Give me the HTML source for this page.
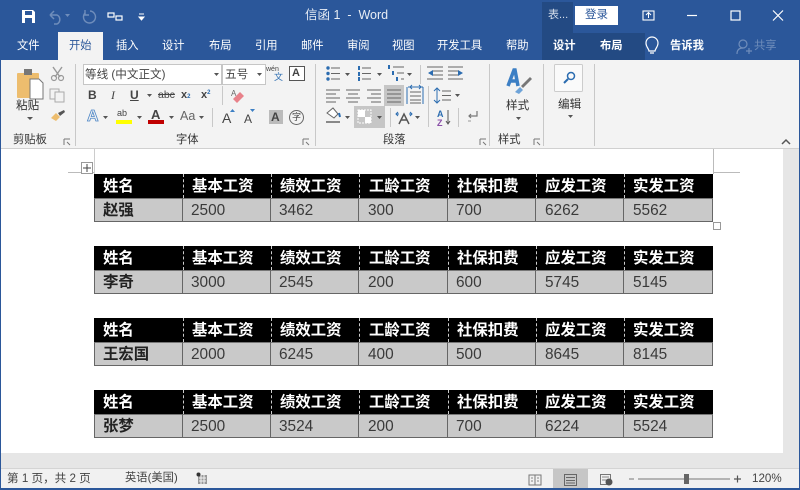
<!DOCTYPE html>
<html lang="zh"><head><meta charset="utf-8">
<style>
*{box-sizing:border-box}
html,body{margin:0;padding:0}
body{width:800px;height:490px;overflow:hidden;position:relative;background:#e6e6e6;font-family:"Liberation Sans","Noto Sans CJK SC",sans-serif;color:#333}
.a{position:absolute;white-space:nowrap;line-height:1}
.r{position:absolute}
svg{position:absolute;left:0;top:0}
.tab{position:absolute;top:40px;font-size:11.3px;color:#fff;line-height:13px;white-space:nowrap}
.t{position:absolute;left:94px;width:619px;height:48px;background:#000}
.row2{position:absolute;left:0;top:24px;width:619px;height:24px;background:#c9c9c9;border:1px solid #666;border-top:1px solid #777}
.c{position:absolute;font-size:15.4px;line-height:24px;white-space:nowrap}
.h{top:1px;color:#fff;font-weight:bold}
.d{top:25px;color:#3a3a3a}
.n{font-weight:bold;color:#222}
.vh{position:absolute;top:0;width:1px;height:24px;border-left:1px dashed #ccc}
.vd{position:absolute;top:24px;width:1px;height:24px;background:#666}
.lab{position:absolute;font-size:11.3px;line-height:12px;color:#333;white-space:nowrap}
</style></head>
<body>
<!-- title bar -->
<div class="r" style="left:0;top:0;width:800px;height:60px;background:#2b579a"></div>
<div class="r" style="left:542px;top:2px;width:31px;height:31px;background:#234a83"></div>
<div class="r" style="left:542px;top:33px;width:103px;height:27px;background:#234a83"></div>
<div class="a" style="left:548px;top:10px;font-size:11px;color:#d5deeb">表...</div>
<div class="r" style="left:575px;top:6px;width:43px;height:19px;background:#fff"></div>
<div class="a" style="left:585px;top:10px;font-size:11.5px;color:#2b579a">登录</div>
<div class="a" style="left:305px;top:9px;font-size:12.5px;color:#e8edf5">信函 1 &nbsp;-&nbsp; Word</div>

<div class="tab" style="left:17px">文件</div>
<div class="r" style="left:58px;top:32px;width:45px;height:29px;background:#f3f3f3"></div>
<div class="tab" style="left:69px;color:#2b579a">开始</div>
<div class="tab" style="left:116px">插入</div>
<div class="tab" style="left:162px">设计</div>
<div class="tab" style="left:209px">布局</div>
<div class="tab" style="left:255px">引用</div>
<div class="tab" style="left:301px">邮件</div>
<div class="tab" style="left:347px">审阅</div>
<div class="tab" style="left:392px">视图</div>
<div class="tab" style="left:437px">开发工具</div>
<div class="tab" style="left:506px">帮助</div>
<div class="tab" style="left:553px;font-weight:bold">设计</div>
<div class="tab" style="left:600px;font-weight:bold">布局</div>
<div class="tab" style="left:670px;font-weight:bold">告诉我</div>
<div class="tab" style="left:754px;color:#6f8dbb">共享</div>

<!-- ribbon -->
<div class="r" style="left:1px;top:60px;width:798px;height:89px;background:#f3f3f3"></div>
<div class="r" style="left:1px;top:148px;width:798px;height:1px;background:#d0d0d0"></div>
<div class="r" style="left:75px;top:64px;width:1px;height:82px;background:#c8c8c8"></div>
<div class="r" style="left:315px;top:64px;width:1px;height:82px;background:#c8c8c8"></div>
<div class="r" style="left:489px;top:64px;width:1px;height:82px;background:#c8c8c8"></div>
<div class="r" style="left:543px;top:64px;width:1px;height:82px;background:#c8c8c8"></div>
<div class="r" style="left:594px;top:64px;width:1px;height:82px;background:#c8c8c8"></div>
<div class="r" style="left:222px;top:86px;width:1px;height:19px;background:#c8c8c8"></div>
<div class="r" style="left:212px;top:108px;width:1px;height:19px;background:#c8c8c8"></div>
<div class="r" style="left:420px;top:65px;width:1px;height:19px;background:#c8c8c8"></div>
<div class="r" style="left:428px;top:86px;width:1px;height:41px;background:#c8c8c8"></div>
<div class="r" style="left:390px;top:108px;width:1px;height:19px;background:#c8c8c8"></div>
<div class="r" style="left:458px;top:108px;width:1px;height:19px;background:#c8c8c8"></div>

<div class="r" style="left:83px;top:64px;width:139px;height:21px;background:#fff;border:1px solid #c6c6c6"></div>
<div class="r" style="left:222px;top:64px;width:44px;height:21px;background:#fff;border:1px solid #c6c6c6"></div>
<div class="a" style="left:85px;top:69px;font-size:11.6px;color:#444">等线 (中文正文)</div>
<div class="a" style="left:225px;top:69px;font-size:11.6px;color:#444">五号</div>

<div class="a" style="left:88px;top:89px;font-size:12px;font-weight:bold;color:#444">B</div>
<div class="a" style="left:111px;top:89px;font-size:12px;font-style:italic;font-family:'Liberation Serif',serif;color:#444">I</div>
<div class="a" style="left:130px;top:89px;font-size:12px;font-weight:bold;text-decoration:underline;color:#444">U</div>
<div class="a" style="left:158px;top:90px;font-size:10.5px;text-decoration:line-through;color:#444">abc</div>
<div class="a" style="left:181px;top:90px;font-size:11px;font-weight:bold;color:#444">x<span style="font-size:6px;color:#2b6cb0">2</span></div>
<div class="a" style="left:201px;top:90px;font-size:11px;font-weight:bold;color:#444">x<span style="font-size:6px;color:#2b6cb0;vertical-align:4px">2</span></div>
<div class="a" style="left:87px;top:109px;font-size:16px;font-weight:bold;color:#f3f3f3;-webkit-text-stroke:.8px #4d86c6">A</div>
<div class="a" style="left:117px;top:109px;font-size:9px;color:#444">ab</div>
<div class="r" style="left:116px;top:120px;width:16px;height:4px;background:#ff0"></div>
<div class="a" style="left:151px;top:108px;font-size:13px;font-weight:bold;color:#444">A</div>
<div class="r" style="left:148px;top:120px;width:16px;height:4px;background:#c00000"></div>
<div class="a" style="left:180px;top:110px;font-size:12.5px;color:#666">Aa</div>
<div class="a" style="left:222px;top:111px;font-size:14px;color:#444">A</div>
<div class="a" style="left:244px;top:113px;font-size:12px;color:#444">A</div>
<div class="a" style="left:266px;top:66px;font-size:7px;color:#444">wén</div>
<div class="a" style="left:274px;top:73px;font-size:9px;color:#2b6cb0">文</div>
<div class="r" style="left:289px;top:66px;width:16px;height:15px;background:#fff;border:1px solid #555"></div>
<div class="a" style="left:292px;top:68px;font-size:11px;font-weight:bold;color:#444">A</div>
<div class="r" style="left:269px;top:110px;width:14px;height:14px;background:#bbb"></div>
<div class="a" style="left:271px;top:111px;font-size:12px;font-weight:bold;color:#444">A</div>
<div class="r" style="left:289px;top:110px;width:15px;height:15px;border:1px solid #666;border-radius:50%"></div>
<div class="a" style="left:292px;top:113px;font-size:9px;color:#444">字</div>

<div class="r" style="left:384px;top:85px;width:20px;height:21px;background:#c6c6c6"></div>
<div class="r" style="left:354px;top:106px;width:31px;height:22px;background:#c6c6c6"></div>

<svg width="800" height="490" fill="none">
 <!-- qat save -->
 <path d="M22 10h11l2 2v11H22z" fill="#fff"/><rect x="25" y="11" width="7" height="4" fill="#2b579a"/><rect x="25" y="18" width="7" height="5" fill="#2b579a"/>
 <path d="M50 15h7a5 5 0 0 1 0 9h-3M50 15l4-4M50 15l4 4" stroke="#6f8dbb" stroke-width="1.5"/>
 <path d="M65 14h5l-2.500 3z" fill="#6f8dbb"/>
 <path d="M90 11a6 6 0 1 1-5 2M85 10v5h4" stroke="#6f8dbb" stroke-width="1.4"/>
 <rect x="108" y="13" width="6" height="4" stroke="#fff" stroke-width="1.2"/><rect x="116" y="16" width="6" height="4" stroke="#fff" stroke-width="1.2"/>
 <path d="M139 14h5M139 17l2.500 3 2.500-3z" stroke="#fff" fill="#fff"/>
 <!-- window controls -->
 <rect x="643" y="11" width="11" height="9" stroke="#fff" stroke-width="1.1"/><path d="M648.500 18v-5M646 15l2.500-2.500 2.500 2.500" stroke="#fff"/>
 <path d="M687 15.500h10" stroke="#fff" stroke-width="1.2"/>
 <rect x="731" y="11" width="9" height="9" stroke="#fff" stroke-width="1.2"/>
 <path d="M773 10.500l10 10M783 10.500l-10 10" stroke="#fff" stroke-width="1.2"/>
 <!-- bulb -->
 <path d="M649 51c0-2-3-4-3-8a6 6 0 0 1 12 0c0 4-3 6-3 8zM650 53h4" stroke="#fff" stroke-width="1.2"/>
 <!-- share -->
 <circle cx="743" cy="44" r="4" stroke="#6f8dbb" stroke-width="1.2"/><path d="M737 54c0-4 2-6 6-6M746 51h6M749 48v6" stroke="#6f8dbb" stroke-width="1.2"/>
 <!-- paste -->
 <rect x="17" y="73" width="22" height="25" rx="1" fill="#edbd6e"/><rect x="24" y="69" width="8" height="6" fill="#777"/>
 <path d="M30 79h9l4 4v16H30z" fill="#fff" stroke="#777"/>
 <!-- scissors/copy/brush -->
 <path d="M53 67l7 10M62 67l-7 10" stroke="#999" stroke-width="1.4"/><circle cx="54" cy="78" r="2.500" stroke="#999" stroke-width="1.2"/><circle cx="61" cy="78" r="2.500" stroke="#999" stroke-width="1.2"/>
 <rect x="50" y="89" width="9" height="10" stroke="#aaa"/><rect x="55" y="92" width="9" height="10" fill="#f3f3f3" stroke="#aaa"/>
 <path d="M51 118l5-5 4 4-4 4z" fill="#edbd6e"/><path d="M58 113l6-3 1 2-5 4z" fill="#555"/>
 <!-- dropdown arrows -->
 <g fill="#555">
  <path d="M27 117h6l-3 3zM214 73h5l-2.500 3zM257 73h5l-2.500 3zM147 94h5l-2.500 3zM103 116h5l-2.500 3zM137 116h5l-2.500 3zM169 116h5l-2.500 3zM199 116h5l-2.500 3zM345 73h5l-2.500 3zM377 73h5l-2.500 3zM407 73h5l-2.500 3zM455 94h5l-2.500 3zM345 116h5l-2.500 3zM377 116h5l-2.500 3zM415 116h5l-2.500 3zM516 117h5l-2.500 3zM568 115h5l-2.500 3z"/>
 </g>
 <!-- font size arrows -->
 <path d="M230 112l2.500-3 2.500 3zM250 109h5l-2.500 3z" fill="#3c7fc4"/>
 <!-- eraser -->
 <path d="M233 99l7-7 4 4-7 7z" fill="#e8818a"/>
 <text x="231" y="96" font-size="8" fill="#666" font-family="Liberation Sans">A</text>
 <!-- list icons -->
 <g stroke="#666" stroke-width="1">
  <path d="M331 68h9M331 73.500h9M331 79h9M362 68h9M362 73.500h9M362 79h9M393 67h11M397 73h7M401 79h3M432 71h11M432 75h11M427 67h16M427 79h16M448 67h15M448 79h15M448 71h11M448 75h11"/>
  <path d="M326 90h14M326 94h10M326 98h14M326 102h10M346 90h14M348 94h10M346 98h14M348 102h10M367 90h14M371 94h10M367 98h14M371 102h10M387 90h14M387 94h14M387 98h14M387 102h14"/>
  <path d="M410 92h11M410 96h11M410 100h11M410 103h11"/>
  <path d="M442 91h9M442 95.500h9M442 100h9"/>
 </g>
 <path d="M408 87h15M421 87l-2-2M421 87l-2 2M410 87l2-2M410 87l2 2" stroke="#2b6cb0"/>
 <path d="M407 87v17M423 87v17" stroke="#2b6cb0"/>
 <path d="M437 88v15M434 91l3-3 3 3M434 100l3 3 3-3" stroke="#2b6cb0"/>
 <g fill="#2b6cb0"><circle cx="328" cy="68" r="1.700"/><circle cx="328" cy="73.500" r="1.700"/><circle cx="328" cy="79" r="1.700"/>
 <rect x="358" y="66" width="2" height="4"/><rect x="358" y="72" width="2" height="4"/><rect x="358" y="77" width="2" height="4"/>
 <rect x="388" y="65" width="2" height="4"/><rect x="392" y="71" width="2" height="4"/><rect x="396" y="77" width="2" height="4"/></g>
 <path d="M428 73l5-3v6zM463 73l-5-3v6z" fill="#2b6cb0"/>
 <path d="M327 113l6-5 5 6-4 4z" stroke="#666" fill="#fff"/><path d="M326 122h14" stroke="#888" stroke-width="2"/><path d="M339 113l1 4" stroke="#2b6cb0" stroke-width="2"/>
 <rect x="358" y="110" width="13" height="13" stroke="#fff" stroke-dasharray="2 1"/><rect x="358" y="110" width="7" height="7" fill="#fff"/><rect x="365" y="117" width="6" height="6" fill="#fff"/>
 <path d="M399 124l5-10 5 10M401 120h6" stroke="#555" stroke-width="1.500"/><path d="M398 112l-2 2 2 2M410 112l2 2-2 2M396 114h3M409 114h3" stroke="#2b6cb0"/>
 <text x="437" y="117" font-size="9" fill="#2b6cb0" font-family="Liberation Sans" font-weight="bold">A</text>
 <text x="437" y="126" font-size="9" fill="#8a4fa8" font-family="Liberation Sans" font-weight="bold">Z</text>
 <path d="M448 110v14M446 121l2 3 2-3" stroke="#555"/>
 <path d="M477 111v5h-8M471 114l-2 2 2 2" stroke="#777" stroke-width="1.200"/><path d="M468 121l3 0" stroke="#999"/>
 <!-- styles icon -->
 <path d="M508 86l6-16h1l3 16M510 81h7" stroke="#3c7fc4" stroke-width="3.500"/><path d="M521 86l9-9 2 2-9 9z" fill="#777"/><path d="M515 92l5-5 3 3-4 4z" fill="#6ea3d8"/>
 <!-- find -->
 <rect x="554.500" y="64.500" width="28" height="27" rx="1" fill="#fafafa" stroke="#ccc"/>
 <circle cx="571" cy="76" r="3.500" stroke="#2b6cb0" stroke-width="1.500"/><path d="M568 79l-4 4" stroke="#2b6cb0" stroke-width="2"/>
 <!-- launcher/collapse -->
 <g stroke="#777"><path d="M64 139h6M64 139v6M67 142l3 3"/><path d="M303 139h6M303 139v6M306 142l3 3"/><path d="M480 139h6M480 139v6M483 142l3 3"/><path d="M534 139h6M534 139v6M537 142l3 3"/></g>
 <path d="M782 144l4-4 4 4" stroke="#555" stroke-width="1.500"/>
</svg>

<div class="lab" style="left:16px;top:100px;font-size:11.6px">粘贴</div>
<div class="lab" style="left:13px;top:134px">剪贴板</div>
<div class="lab" style="left:176px;top:134px">字体</div>
<div class="lab" style="left:383px;top:134px">段落</div>
<div class="lab" style="left:498px;top:134px">样式</div>
<div class="lab" style="left:506px;top:100px;font-size:11.6px">样式</div>
<div class="lab" style="left:558px;top:99px;font-size:11.6px">编辑</div>

<!-- document -->
<div class="r" style="left:1px;top:149px;width:782px;height:304px;background:#fff"></div>
<div class="r" style="left:68px;top:172px;width:26px;height:1px;background:#bbb"></div>
<div class="r" style="left:713px;top:172px;width:27px;height:1px;background:#bbb"></div>
<div class="r" style="left:94px;top:149px;width:1px;height:25px;background:#ccc"></div>
<div class="r" style="left:713px;top:149px;width:1px;height:25px;background:#bbb"></div>
<div class="r" style="left:81px;top:162px;width:12px;height:12px;background:#fff;border:1px solid #999"></div>
<svg width="800" height="490" fill="none"><path d="M87 164v8M83 168h8" stroke="#444"/></svg>
<div class="r" style="left:713px;top:222px;width:8px;height:8px;background:#fff;border:1px solid #999"></div>

<div class="t" style="top:174px"><div class="row2"></div>
<div class="vh" style="left:89px"></div><div class="vh" style="left:177px"></div><div class="vh" style="left:265px"></div><div class="vh" style="left:354px"></div><div class="vh" style="left:442px"></div><div class="vh" style="left:530px"></div>
<div class="vd" style="left:88px"></div><div class="vd" style="left:176px"></div><div class="vd" style="left:264px"></div><div class="vd" style="left:353px"></div><div class="vd" style="left:441px"></div><div class="vd" style="left:529px"></div>
<div class="c h" style="left:9px">姓名</div><div class="c h" style="left:98px">基本工资</div><div class="c h" style="left:186px">绩效工资</div><div class="c h" style="left:275px">工龄工资</div><div class="c h" style="left:363px">社保扣费</div><div class="c h" style="left:451px">应发工资</div><div class="c h" style="left:539px">实发工资</div>
<div class="c d n" style="left:9px">赵强</div><div class="c d" style="left:97px">2500</div><div class="c d" style="left:185px">3462</div><div class="c d" style="left:274px">300</div><div class="c d" style="left:362px">700</div><div class="c d" style="left:451px">6262</div><div class="c d" style="left:539px">5562</div></div>

<div class="t" style="top:246px"><div class="row2"></div>
<div class="vh" style="left:89px"></div><div class="vh" style="left:177px"></div><div class="vh" style="left:265px"></div><div class="vh" style="left:354px"></div><div class="vh" style="left:442px"></div><div class="vh" style="left:530px"></div>
<div class="vd" style="left:88px"></div><div class="vd" style="left:176px"></div><div class="vd" style="left:264px"></div><div class="vd" style="left:353px"></div><div class="vd" style="left:441px"></div><div class="vd" style="left:529px"></div>
<div class="c h" style="left:9px">姓名</div><div class="c h" style="left:98px">基本工资</div><div class="c h" style="left:186px">绩效工资</div><div class="c h" style="left:275px">工龄工资</div><div class="c h" style="left:363px">社保扣费</div><div class="c h" style="left:451px">应发工资</div><div class="c h" style="left:539px">实发工资</div>
<div class="c d n" style="left:9px">李奇</div><div class="c d" style="left:97px">3000</div><div class="c d" style="left:185px">2545</div><div class="c d" style="left:274px">200</div><div class="c d" style="left:362px">600</div><div class="c d" style="left:451px">5745</div><div class="c d" style="left:539px">5145</div></div>

<div class="t" style="top:318px"><div class="row2"></div>
<div class="vh" style="left:89px"></div><div class="vh" style="left:177px"></div><div class="vh" style="left:265px"></div><div class="vh" style="left:354px"></div><div class="vh" style="left:442px"></div><div class="vh" style="left:530px"></div>
<div class="vd" style="left:88px"></div><div class="vd" style="left:176px"></div><div class="vd" style="left:264px"></div><div class="vd" style="left:353px"></div><div class="vd" style="left:441px"></div><div class="vd" style="left:529px"></div>
<div class="c h" style="left:9px">姓名</div><div class="c h" style="left:98px">基本工资</div><div class="c h" style="left:186px">绩效工资</div><div class="c h" style="left:275px">工龄工资</div><div class="c h" style="left:363px">社保扣费</div><div class="c h" style="left:451px">应发工资</div><div class="c h" style="left:539px">实发工资</div>
<div class="c d n" style="left:9px">王宏国</div><div class="c d" style="left:97px">2000</div><div class="c d" style="left:185px">6245</div><div class="c d" style="left:274px">400</div><div class="c d" style="left:362px">500</div><div class="c d" style="left:451px">8645</div><div class="c d" style="left:539px">8145</div></div>

<div class="t" style="top:390px"><div class="row2"></div>
<div class="vh" style="left:89px"></div><div class="vh" style="left:177px"></div><div class="vh" style="left:265px"></div><div class="vh" style="left:354px"></div><div class="vh" style="left:442px"></div><div class="vh" style="left:530px"></div>
<div class="vd" style="left:88px"></div><div class="vd" style="left:176px"></div><div class="vd" style="left:264px"></div><div class="vd" style="left:353px"></div><div class="vd" style="left:441px"></div><div class="vd" style="left:529px"></div>
<div class="c h" style="left:9px">姓名</div><div class="c h" style="left:98px">基本工资</div><div class="c h" style="left:186px">绩效工资</div><div class="c h" style="left:275px">工龄工资</div><div class="c h" style="left:363px">社保扣费</div><div class="c h" style="left:451px">应发工资</div><div class="c h" style="left:539px">实发工资</div>
<div class="c d n" style="left:9px">张梦</div><div class="c d" style="left:97px">2500</div><div class="c d" style="left:185px">3524</div><div class="c d" style="left:274px">200</div><div class="c d" style="left:362px">700</div><div class="c d" style="left:451px">6224</div><div class="c d" style="left:539px">5524</div></div>

<!-- status -->
<div class="r" style="left:1px;top:468px;width:798px;height:20px;background:#f1f1f1;border-top:1px solid #d4d4d4"></div>
<div class="r" style="left:553px;top:469px;width:35px;height:19px;background:#c6c6c6"></div>
<div class="a" style="left:7px;top:473px;font-size:11.6px;color:#444">第 1 页，共 2 页</div>
<div class="a" style="left:125px;top:473px;font-size:11.3px;color:#444">英语(美国)</div>
<div class="a" style="left:752px;top:473px;font-size:11.6px;color:#444">120%</div>
<svg width="800" height="490" fill="none">
 <rect x="198" y="475" width="9" height="9" fill="#999"/><path d="M199 478h7M199 481h7M201 475v9M204 475v9" stroke="#f1f1f1"/><circle cx="198.500" cy="474.500" r="2" fill="#333"/>
 <path d="M529 475h6v10h-6zM535 475h6v10h-6z" stroke="#777"/><path d="M531 478h2M531 481h2M537 478h2M537 481h2" stroke="#888"/>
 <rect x="564.500" y="474.500" width="12" height="11" stroke="#666"/><path d="M566 477.500h9M566 480.500h9M566 483h9" stroke="#666"/>
 <rect x="600.500" y="474.500" width="10" height="10" stroke="#777"/><path d="M602 477h7M602 480h5" stroke="#888"/><circle cx="609" cy="482" r="3.500" fill="#555"/>
 <path d="M629 479h5M638 479h92" stroke="#777"/><path d="M734 479h7M737.500 475.500v7" stroke="#555" stroke-width="1.200"/>
 <rect x="684" y="474" width="5" height="10" fill="#666"/>
</svg>
<!-- window border -->
<div class="r" style="left:0;top:0;width:1px;height:490px;background:#2b579a"></div>
<div class="r" style="left:799px;top:0;width:1px;height:490px;background:#2b579a"></div>
<div class="r" style="left:0;top:488px;width:800px;height:2px;background:#2b579a"></div>
</body></html>
